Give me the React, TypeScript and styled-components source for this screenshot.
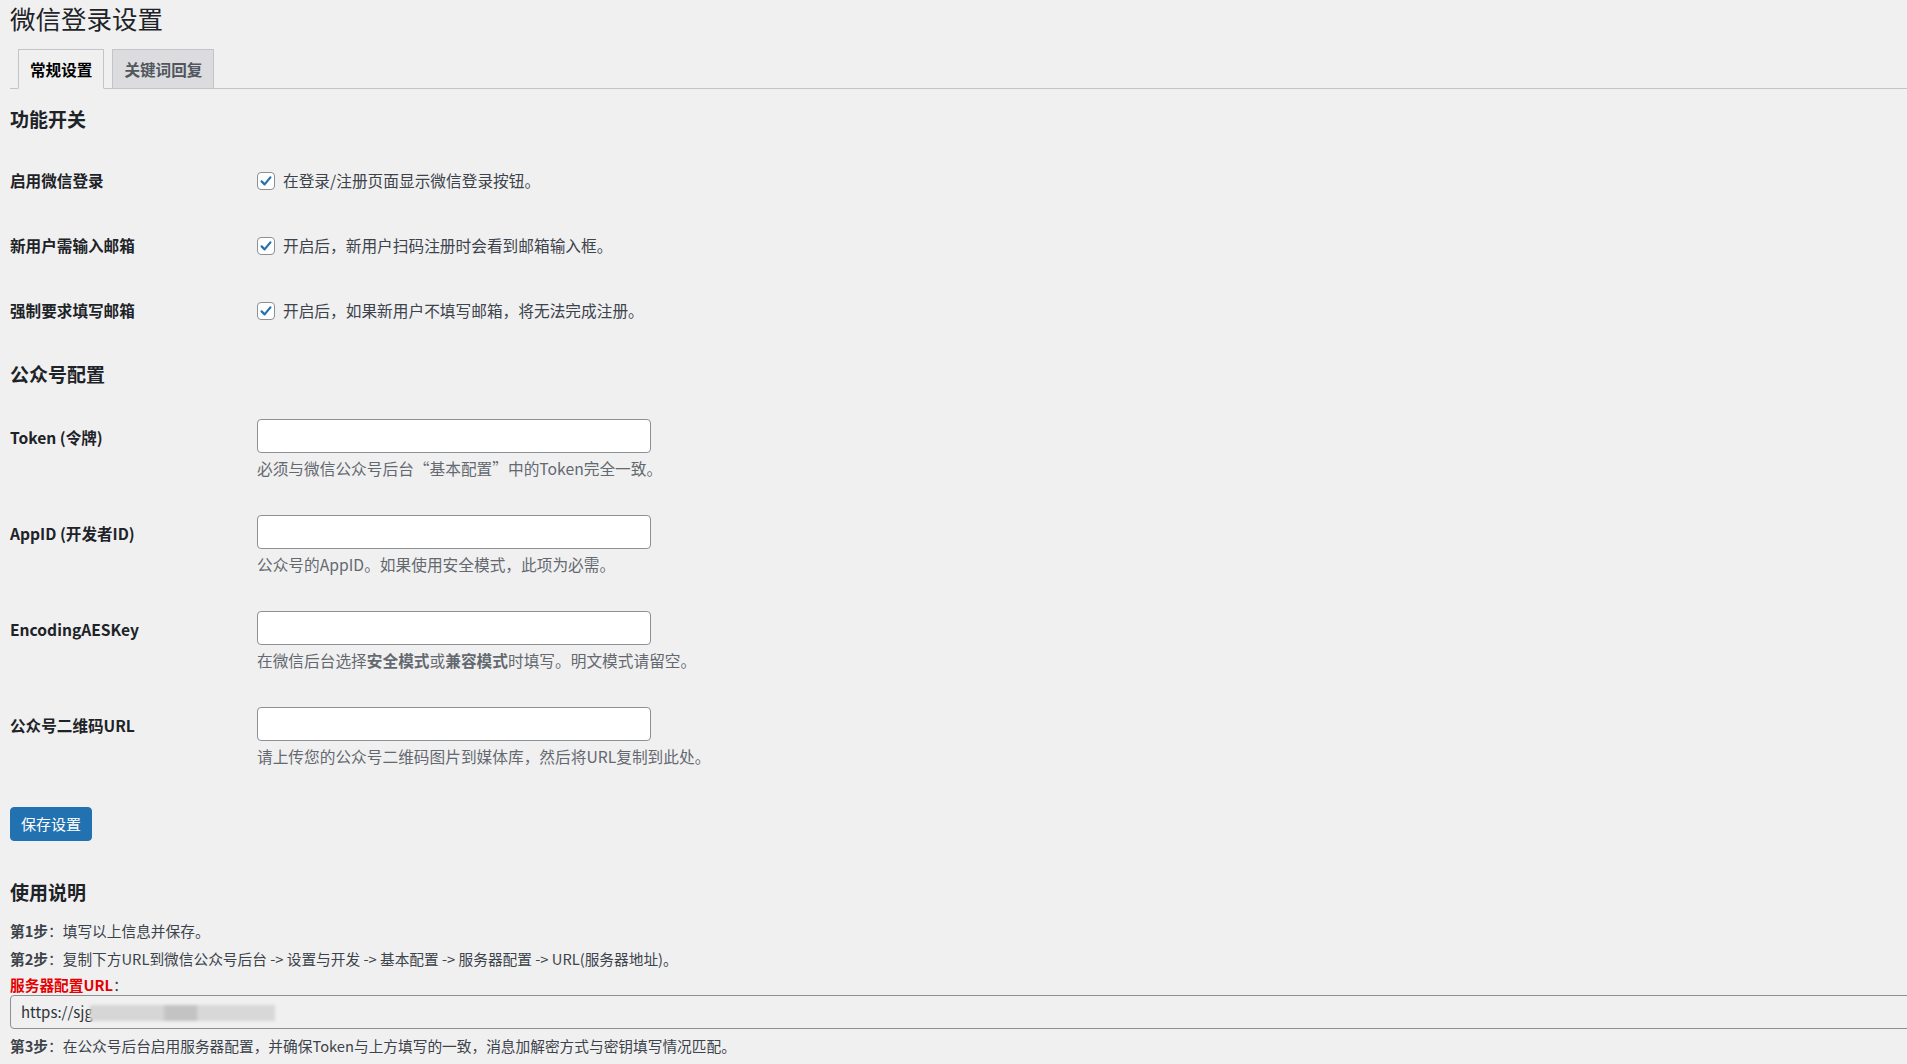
import React from 'react'
import styled, { createGlobalStyle } from 'styled-components'

const GlobalStyle = createGlobalStyle`
  html, body {
    margin: 0;
    padding: 0;
    background: #f0f0f1;
    overflow: hidden;
  }
  body {
    font-family: "Noto Sans CJK SC", "Noto Sans", sans-serif;
    font-size: 14.7px;
    color: #3c434a;
  }
  * {
    box-sizing: border-box;
  }
`

const Wrap = styled.div`
  padding-left: 10px;
  width: 100%;
  overflow: hidden;
`

const Title = styled.h1`
  margin: 0;
  padding-top: 1px;
  font-size: 25.5px;
  font-weight: 400;
  line-height: 33px;
  color: #1d2327;
`

const TabBar = styled.nav`
  display: flex;
  align-items: flex-end;
  gap: 8px;
  margin-top: 15px;
  padding-left: 8px;
  height: 40px;
  border-bottom: 1px solid #c3c4c7;
`

const Tab = styled.a<{ $active?: boolean }>`
  display: inline-flex;
  align-items: center;
  height: 40px;
  margin-bottom: -1px;
  padding: 0 11px;
  border: 1px solid #c3c4c7;
  border-bottom-color: ${p => (p.$active ? '#f0f0f1' : '#c3c4c7')};
  background: ${p => (p.$active ? '#f0f0f1' : '#dcdcde')};
  color: ${p => (p.$active ? '#000' : '#50575e')};
  font-size: 15.6px;
  font-weight: 700;
  text-decoration: none;
  cursor: pointer;
`

const SectionTitle = styled.h2<{ $top: number; $bottom: number }>`
  margin: ${p => p.$top}px 0 ${p => p.$bottom}px;
  font-size: 19px;
  font-weight: 700;
  line-height: 25px;
  color: #1d2327;
`

const CheckRow = styled.div`
  display: grid;
  grid-template-columns: 247px 1fr;
  align-items: center;
  height: 65px;
`

const Label = styled.div`
  font-size: 15.6px;
  font-weight: 700;
  color: #1d2327;
  line-height: 21px;
`

const CheckLabel = styled.label`
  display: flex;
  align-items: center;
  gap: 8px;
  font-size: 15.7px;
  line-height: 21px;
`

const Box = styled.span`
  display: inline-flex;
  align-items: center;
  justify-content: center;
  width: 18px;
  height: 18px;
  border: 1px solid #8c8f94;
  border-radius: 4px;
  background: #fff;
`

const FieldRow = styled.div`
  display: grid;
  grid-template-columns: 247px 1fr;
  height: 96.3px;
  padding-top: 15px;
`

const FieldLabel = styled(Label)`
  padding-top: 8px;
`

const TextInput = styled.input`
  display: block;
  width: 394px;
  height: 34px;
  margin: 0;
  padding: 0 9px;
  border: 1px solid #8c8f94;
  border-radius: 4px;
  background: #fff;
  font: inherit;
`

const Description = styled.p`
  margin: 5px 0 0;
  font-size: 15.7px;
  line-height: 22px;
  color: #646970;
`

const SaveButton = styled.button`
  display: block;
  margin-top: 18px;
  width: 82px;
  height: 34px;
  padding: 0;
  border: 1px solid #2271b1;
  border-radius: 4px;
  background: #2271b1;
  color: #fff;
  font: inherit;
  font-size: 15px;
  cursor: pointer;
`

const Step = styled.p<{ $gap: number }>`
  margin: ${p => p.$gap}px 0 0;
  line-height: 21px;
  color: #3c434a;
`

const RedLabel = styled.span`
  color: #e60000;
  font-weight: 700;
`

const UrlField = styled.div`
  position: relative;
  width: calc(100% + 40px);
`

const UrlInput = styled.input`
  display: block;
  width: 100%;
  height: 34px;
  margin: 0;
  padding: 0 10px;
  border: 1px solid #8c8f94;
  border-radius: 4px;
  background: #f0f0f1;
  color: #2c3338;
  font: inherit;
  font-size: 15px;
`

// 打码遮挡的服务器地址
const Redacted = styled.span`
  position: absolute;
  left: 80px;
  top: 10px;
  width: 185px;
  height: 16px;
  background: linear-gradient(
    90deg,
    #d6d6d6 0%,
    #d6d6d6 39%,
    #c3c3c3 41%,
    #c3c3c3 57%,
    #d8d8d8 59%,
    #d8d8d8 100%
  );
  filter: blur(1.5px);
`

const Check = () => (
  <Box>
    <svg width="14" height="14" viewBox="0 0 14 14">
      <path d="M2.6 7.4 L5.6 10.4 L11.4 3.4" fill="none" stroke="#2271b1" strokeWidth="2.2" strokeLinecap="round" strokeLinejoin="round" />
    </svg>
  </Box>
)

const switches = [
  { label: '启用微信登录', text: '在登录/注册页面显示微信登录按钮。' },
  { label: '新用户需输入邮箱', text: '开启后，新用户扫码注册时会看到邮箱输入框。' },
  { label: '强制要求填写邮箱', text: '开启后，如果新用户不填写邮箱，将无法完成注册。' },
]

const fields: { label: string; desc: React.ReactNode }[] = [
  { label: 'Token (令牌)', desc: '必须与微信公众号后台“基本配置”中的Token完全一致。' },
  { label: 'AppID (开发者ID)', desc: '公众号的AppID。如果使用安全模式，此项为必需。' },
  {
    label: 'EncodingAESKey',
    desc: (
      <>
        在微信后台选择<b>安全模式</b>或<b>兼容模式</b>时填写。明文模式请留空。
      </>
    ),
  },
  { label: '公众号二维码URL', desc: '请上传您的公众号二维码图片到媒体库，然后将URL复制到此处。' },
]

export default function App() {
  return (
    <Wrap>
      <GlobalStyle />
      <Title>微信登录设置</Title>
      <TabBar>
        <Tab $active>常规设置</Tab>
        <Tab>关键词回复</Tab>
      </TabBar>

      <SectionTitle $top={17} $bottom={17}>功能开关</SectionTitle>
      {switches.map(s => (
        <CheckRow key={s.label}>
          <Label>{s.label}</Label>
          <CheckLabel>
            <Check />
            {s.text}
          </CheckLabel>
        </CheckRow>
      ))}

      <SectionTitle $top={18} $bottom={17.5}>公众号配置</SectionTitle>
      {fields.map(f => (
        <FieldRow key={f.label}>
          <FieldLabel>{f.label}</FieldLabel>
          <div>
            <TextInput type="text" />
            <Description>{f.desc}</Description>
          </div>
        </FieldRow>
      ))}

      <SaveButton>保存设置</SaveButton>

      <SectionTitle $top={38} $bottom={0}>使用说明</SectionTitle>
      <Step $gap={16}>
        <b>第1步</b>：填写以上信息并保存。
      </Step>
      <Step $gap={7}>
        <b>第2步</b>：复制下方URL到微信公众号后台 -&gt; 设置与开发 -&gt; 基本配置 -&gt; 服务器配置 -&gt; URL(服务器地址)。
      </Step>
      <Step $gap={5}>
        <RedLabel>服务器配置URL</RedLabel>：
      </Step>
      <UrlField>
        <UrlInput type="text" readOnly value="https://sjg" />
        <Redacted />
      </UrlField>
      <Step $gap={6}>
        <b>第3步</b>：在公众号后台启用服务器配置，并确保Token与上方填写的一致，消息加解密方式与密钥填写情况匹配。
      </Step>
    </Wrap>
  )
}
